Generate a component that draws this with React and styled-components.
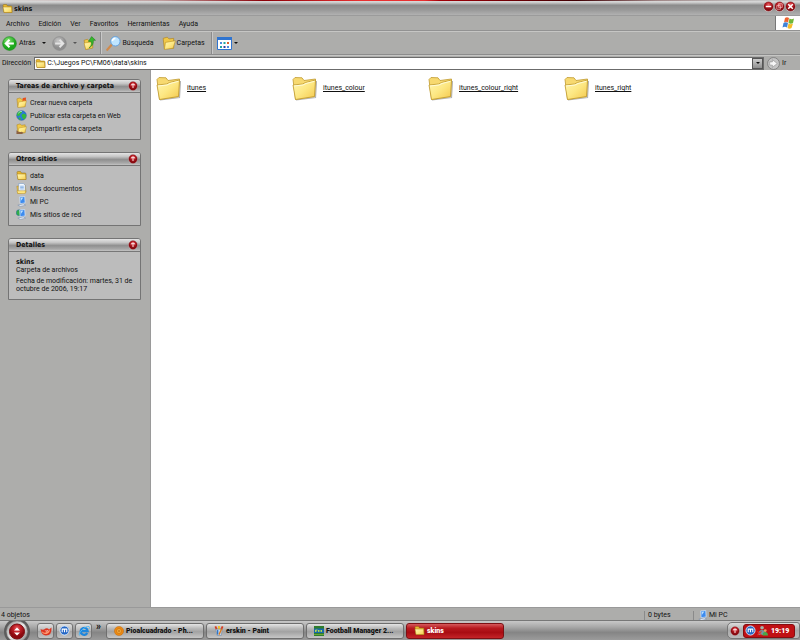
import styled, { createGlobalStyle, css } from 'styled-components';

const GlobalStyle = createGlobalStyle`
  * {
    box-sizing: border-box;
  }
  body {
    margin: 0;
    background: #adadab;
    color: #111;
    font-family: Roboto, sans-serif;
    font-size: 7px;
    line-height: 8px;
  }
  button, input {
    font: inherit;
    color: inherit;
    border: 0;
    padding: 0;
    background: none;
  }
  a {
    color: inherit;
    text-decoration: none;
  }
  svg {
    display: block;
    flex: none;
  }
  ul {
    list-style: none;
    margin: 0;
    padding: 0;
  }
  strong {
    font-family: 'DejaVu Sans Condensed', sans-serif;
  }
`;

const Window = styled.div`
  display: flex;
  flex-direction: column;
  min-height: 100vh;
`;

const TitleBar = styled.header`
  display: flex;
  align-items: center;
  gap: 1px;
  height: 16px;
  padding: 0 4px 0 2px;
  border-top: 1px solid #7a0a10;
  border-image: linear-gradient(90deg, #d8d8d8, #c0a0a0 20%, #8a0008 33%, #e83030 45%, #e83030 53%, #a00008 55%, #400004 72%, #a08888 82%, #c4c4c4 95%) 1;
  background: linear-gradient(#dcdcdc, #c6c6c6 12%, #8b8b8b 28%, #999 60%, #b0b0b0 92%, #8c8c8c);
`;

const WindowTitle = styled.h1`
  flex: 1;
  margin: 0;
  font-family: 'DejaVu Sans Condensed', sans-serif;
  font-size: 7px;
  line-height: 8px;
`;

const WindowButtons = styled.div`
  display: flex;
  align-self: flex-start;
`;

const IconButton = styled.button`
  display: flex;
  align-items: center;
`;

const MenuRow = styled.div`
  display: flex;
  height: 15px;
  border-bottom: 1px solid #929292;
`;

const Menu = styled.nav`
  display: flex;
  flex: 1;
  align-items: center;
  gap: 9px;
  padding: 1px 0 0 6px;
`;

const Flag = styled.div`
  display: flex;
  align-items: center;
  justify-content: center;
  width: 25px;
  border-left: 1px solid #777;
  background: #fff;
`;

const ToolBar = styled.div`
  display: flex;
  align-items: center;
  height: 24px;
  padding-left: 2px;
  border-top: 1px solid #c6c6c4;
  border-bottom: 1px solid #8c8c8c;
`;

const ToolButton = styled.button`
  display: flex;
  align-items: center;
  gap: ${({ $tight }) => ($tight ? 1 : 2)}px;
  margin-right: ${({ $after = 0 }) => $after}px;
`;

const Arrow = styled.span`
  border: 2px solid transparent;
  border-top-color: ${({ $dim }) => ($dim ? '#555' : '#111')};
  border-bottom: 0;
  margin-left: ${({ $before = 0 }) => $before}px;
`;

const Divider = styled.span`
  width: 2px;
  height: 22px;
  margin-right: 4px;
  border-left: 1px solid #8b8b8b;
  border-right: 1px solid #c8c8c8;
`;

const AddressBar = styled.form`
  display: flex;
  align-items: center;
  height: 15px;
  padding: 1px 0 1px 2px;
  gap: 3px;
  border-top: 1px solid #c6c6c4;
`;

const AddressField = styled.div`
  display: flex;
  flex: 1;
  align-items: center;
  height: 13px;
  gap: 1px;
  padding-left: 0;
  border: 1px solid #6b6b6b;
  background: #fff;
`;

const AddressInput = styled.input`
  flex: 1;
  height: 10px;
  outline: 0;
`;

const DropButton = styled.button`
  display: flex;
  align-items: center;
  justify-content: center;
  width: 11px;
  height: 11px;
  border: 1px solid #555;
  background: linear-gradient(#ccc, #8e8e8e);
`;

const GoButton = styled.button`
  display: flex;
  align-items: center;
  gap: 2px;
  width: 33px;
`;

const Content = styled.div`
  display: flex;
  flex: 1;
`;

const Sidebar = styled.aside`
  display: flex;
  flex-direction: column;
  flex: none;
  gap: 12px;
  width: 151px;
  padding: 9px 9px 9px 8px;
  border-right: 1px solid #9a9a9a;
`;

const PanelBox = styled.section`
  border: 1px solid #747474;
  border-radius: 3px 3px 0 0;
  background: #bcbcbc;
`;

const PanelHead = styled.h2`
  display: flex;
  align-items: center;
  justify-content: space-between;
  height: 13px;
  margin: 0;
  padding: 0 2px 0 7px;
  border-bottom: 1px solid #777;
  border-radius: 2px 2px 0 0;
  background: linear-gradient(#e4e4e4, #c4c4c4 30%, #8f8f8f 55%, #a9a9a9 85%, #c4c4c4);
  font-family: 'DejaVu Sans Condensed', sans-serif;
  font-size: 7px;
  line-height: 8px;
`;

const TaskList = styled.ul`
  padding: 3px 7px 4px;
`;

const TaskLink = styled.a`
  display: flex;
  align-items: center;
  gap: 3px;
  height: 13px;
`;

const Details = styled.div`
  padding: 6px 7px;
  p {
    margin: 0 0 3px;
  }
  p:last-child {
    margin: 0;
  }
`;

const Files = styled.main`
  display: grid;
  flex: 1;
  grid-template-columns: repeat(auto-fill, 136px);
  align-content: start;
  padding: 4px 5px;
  background: #fff;
`;

const FileLink = styled.a`
  display: flex;
  align-items: center;
  gap: 6px;
  height: 28px;
  text-decoration: underline;
`;

const StatusBar = styled.footer`
  display: flex;
  align-items: center;
  height: 13px;
  padding-top: 2px;
  border-top: 1px solid #999;
`;

const StatusCell = styled.div`
  display: flex;
  align-items: center;
  gap: 1px;
  height: 9px;
  padding-left: ${({ $lead }) => ($lead ? 1 : 3)}px;
  ${({ $width }) =>
    $width
      ? css`
          width: ${$width}px;
          border-left: 1px solid #8a8a8a;
        `
      : css`
          flex: 1;
        `}
`;

const TaskBar = styled.footer`
  display: flex;
  align-items: center;
  height: 20px;
  border-top: 1px solid #777;
  background: linear-gradient(#c8c8c8, #aaa 30%, #858585 60%, #9b9b9b);
`;

const StartButton = styled.button`
  display: flex;
  justify-content: center;
  width: 33px;
  margin-right: 4px;
`;

const QuickButton = styled.button`
  display: flex;
  align-items: center;
  justify-content: center;
  width: 17px;
  height: 16px;
  margin-right: 2px;
  border: 1px solid #747474;
  border-radius: 3px;
  background: linear-gradient(#e0e0e0, #b5b5b5 50%, #a4a4a4 52%, #c4c4c4);
`;

const More = styled.span`
  width: 12px;
  height: 16px;
  padding-left: 2px;
  font-size: 10px;
  font-weight: bold;
`;

const TaskButton = styled.button`
  display: flex;
  align-items: center;
  gap: 2px;
  flex: 0 1 98px;
  height: 16px;
  margin-right: 2px;
  padding-left: 7px;
  border: 1px solid ${({ $active }) => ($active ? '#7c1014' : '#6e6e6e')};
  border-radius: 3px;
  background: ${({ $active }) =>
    $active
      ? 'linear-gradient(#d65a5c, #b81a20 30%, #a80c12 60%, #c42428)'
      : 'linear-gradient(#e4e4e4, #bbb 30%, #a2a2a2 55%, #c6c6c6)'};
  color: ${({ $active }) => ($active ? '#fff' : '#111')};
  font-weight: 900;
  white-space: nowrap;
`;

const Tray = styled.div`
  display: flex;
  align-items: center;
  gap: 3px;
  height: 17px;
  margin-left: auto;
  padding: 0 4px 0 2px;
  border: 1px solid #777;
  border-radius: 5px 3px 3px 5px;
  background: linear-gradient(#ddd, #aaa 50%, #bbb);
`;

const Clock = styled.div`
  display: flex;
  align-items: center;
  gap: 1px;
  width: 52px;
  height: 14px;
  padding-left: 1px;
  border: 1px solid #860c10;
  border-radius: 3px;
  background: #c01014;
  color: #fff;
  font-weight: 900;
  time {
    margin-left: 2px;
  }
`;

const Folder = () => (
  <svg width="25" height="25" viewBox="0 0 25 25">
    <path d="M4 24 23.500 21.500 24.500 5" fill="none" stroke="#777" strokeWidth="1.200" opacity=".55" />
    <path d="M1 3.500 3 1.500 10 1.800 12 4.500 23.500 3 22.500 20.500 3.500 23.500z" fill="#f7d970" stroke="#c09a30" strokeWidth=".8" />
    <path d="M1 9 10.500 8 13.500 6.500 23.500 4 22.500 20.500 3.500 23.500z" fill="url(#folderFace)" stroke="#c09a30" strokeWidth=".8" />
    <path d="M2 10 11 9l3-1.500 8.500-2.200" fill="none" stroke="#fffbd8" />
  </svg>
);

const SmallFolder = () => (
  <svg width="11" height="11" viewBox="0 0 22 22">
    <path d="M2 5q0-2 2-2h5l2 3h7q2 0 2 2v11H4z" fill="#e8b830" stroke="#8f6d14" />
    <path d="M2 8h17l1 11H4z" fill="url(#folderFace)" stroke="#a87c18" />
  </svg>
);

const OpenFolder = ({ size = 11, children }) => (
  <svg width={size} height={size} viewBox="0 0 24 24">
    <path d="M2 4 9 2l3 3 8-1v17L4 22z" fill="#f0c848" stroke="#a87c18" />
    <path d="M6 11 23 8l-4 13-15 2z" fill="url(#folderFace)" stroke="#b98f22" />
    {children}
  </svg>
);

const RedDot = ({ size = 10, children }) => (
  <svg width={size} height={size} viewBox="0 0 12 12">
    <circle cx="6" cy="6" r="5.600" fill="#ddd" />
    <circle cx="6" cy="6" r="5" fill="url(#redBall)" stroke="#780a10" strokeWidth=".6" />
    {children}
  </svg>
);

const Chevrons = () => (
  <RedDot>
    <path d="M3.500 5 6 3.500 8.500 5M6 4v4.500" stroke="#fff" fill="none" strokeWidth="1.100" />
  </RedDot>
);

const Globe = () => (
  <svg width="11" height="11" viewBox="0 0 24 24">
    <circle cx="12" cy="12" r="10.500" fill="#2b7bd8" stroke="#15509a" />
    <path d="M5 4c4-3 8-2 8 1s-4 2-4 5-5 4-7 2c0-3 1-6 3-8zM14 9c4-2 7 0 8 3s-2 8-5 8-2-4-4-6 0-4 1-5zM6 16l5 2-1 4c-3 0-5-3-4-6z" fill="#35b93c" />
    <path d="M5 7q4-5 8-4" stroke="#d6f4ff" fill="none" strokeWidth="1.500" />
  </svg>
);

const Computer = ({ network }) => (
  <svg width="11" height="11" viewBox="0 0 24 24">
    {network && <circle cx="7" cy="8" r="6.500" fill="#31ad49" stroke="#2464b0" />}
    <path d="M8 2 19 1l1 14-11 2z" fill="#3d8bee" stroke="#dbe9fa" strokeWidth="1.500" />
    <path d="M10 4l6-.6L10.500 11z" fill="#b9e0ff" />
    <path d="m4 20 12-3 5 3-11 3z" fill="#dce4f0" stroke="#7085a4" />
  </svg>
);

const Documents = () => (
  <svg width="11" height="11" viewBox="0 0 24 24">
    <path d="M2 7 20 5l2 15-18 3z" fill="#efc54c" stroke="#a87c18" />
    <path d="M6 1h10l4 4v13H6z" fill="#f5faff" stroke="#5b87c0" />
    <path d="M9 7h8M9 10h8M9 13h8" stroke="#5b93d8" strokeWidth="1.500" />
    <path d="M2 17h19l-1 6H4z" fill="#ffe680" stroke="#b98f22" />
  </svg>
);

const RoundArrow = ({ back }) => (
  <svg width="15" height="15" viewBox="0 0 24 24">
    <circle cx="12" cy="12" r="11" fill={back ? 'url(#greenBall)' : 'url(#greyBall)'} stroke={back ? '#178a18' : '#888'} />
    <path
      d={back ? 'M19 12H6m6-6-6 6 6 6' : 'M5 12h13m-6-6 6 6-6 6'}
      fill="none"
      stroke={back ? '#fff' : '#e4e4e4'}
      strokeWidth="3.200"
    />
  </svg>
);

const UpFolder = () => (
  <svg width="13" height="14" viewBox="0 0 24 26">
    <path d="M2 8 8 6l3 3 7-1v14L5 25z" fill="#f0c848" stroke="#a87c18" />
    <path d="M2 13 16 11l2 11-13 3z" fill="url(#folderFace)" stroke="#b98f22" />
    <path d="M11 22q6-4 4-12h-5l6-9 7 7h-4q1 10-8 14z" fill="#36b82c" stroke="#1b7d18" />
  </svg>
);

const Magnifier = () => (
  <svg width="15" height="15" viewBox="0 0 24 24">
    <path d="m9 14-7 8" stroke="#d08a4c" strokeWidth="3.500" strokeLinecap="round" />
    <circle cx="15" cy="8.500" r="7.500" fill="#bfe5ff" stroke="#5f9fe0" strokeWidth="1.500" />
    <path d="M10 8q1-4 5-4.500" stroke="#fff" strokeWidth="2.500" fill="none" />
  </svg>
);

const Views = () => (
  <svg width="15" height="13" viewBox="0 0 15 13">
    <path d="M.5.5h14v12H.5z" fill="#fff" stroke="#2f74d0" />
    <path d="M0 0h15v3H0z" fill="#2f74d0" />
    <path d="M3 5h2v2H3zM10 9h2v2h-2z" fill="#4f8be0" />
    <path d="M6.500 5h2v2h-2zM3 9h2v2H3z" fill="#22a6a0" />
    <path d="M10 5h2v2h-2z" fill="#e06030" />
    <path d="M6.500 9h2v2h-2z" fill="#383fa0" />
  </svg>
);

const WindowsFlag = () => (
  <svg width="13" height="12" viewBox="0 0 26 24">
    <path d="M6 2q4-3 8 0l-2 9q-4-3-8 0z" fill="#ef6230" />
    <path d="M15 3q4 3 9 0l-2 9q-4 3-9 0z" fill="#70b838" />
    <path d="M3 12q4-3 9 0l-2 9q-4-3-9 0z" fill="#3f83d8" />
    <path d="M13 13q4 3 9 0l-3 9q-4 3-8 0z" fill="#f6bc28" />
  </svg>
);

const BlueM = () => (
  <svg width="11" height="11" viewBox="0 0 24 24">
    <circle cx="12" cy="12" r="10" fill="#2466c4" stroke="#dcecff" strokeWidth="2" />
    <path d="M7 16V9h10v7M12 9v7" stroke="#fff" strokeWidth="2.400" fill="none" />
  </svg>
);

const Firebird = () => (
  <svg width="12" height="12" viewBox="0 0 24 24">
    <path d="M1 8q3 2 7 1 6-5 10 0l5-4q1 16-11 16Q3 21 1 8z" fill="#dc3420" />
    <path d="M3 12q6 6 12 1 4-2 5-5 0 8-7 10-8 1-10-6z" fill="#ff9a70" />
    <path d="M9 11q5 1 8-1-2 5-8 1z" fill="#fff" />
  </svg>
);

const Explorer = () => (
  <svg width="12" height="12" viewBox="0 0 24 24">
    <path d="M18.500 16a7 7 0 1 1 .8-4H6" fill="none" stroke="#1e86dc" strokeWidth="4.500" />
    <path d="M3 21C-1 16 15 1 22 3q2 1 0 5" fill="none" stroke="#52b8f4" strokeWidth="2" />
  </svg>
);

const Orange = () => (
  <svg width="10" height="10" viewBox="0 0 24 24">
    <circle cx="12" cy="12" r="11" fill="#ee8a12" stroke="#b4600a" />
    <circle cx="12" cy="12" r="6" fill="#f8b040" stroke="#c46a08" strokeWidth="1.500" />
    <path d="M9 12h6M12 9v6" stroke="#b4600a" strokeWidth="1.500" />
  </svg>
);

const PaintCup = () => (
  <svg width="10" height="11" viewBox="0 0 22 24">
    <path d="m7 12-4-9M15 12l4-9" stroke="#d83a20" strokeWidth="4" />
    <path d="M11 12V2" stroke="#f5c020" strokeWidth="4" />
    <path d="M4 9h14l-2 14H7z" fill="#c4d8ec" stroke="#5e7798" />
    <path d="M8 11v10" stroke="#2e75c8" strokeWidth="3" />
    <path d="m11 21 6-13" stroke="#e07818" strokeWidth="3" />
  </svg>
);

const Football = () => (
  <svg width="10" height="10" viewBox="0 0 20 20">
    <path d="M0 0h20v20H0z" fill="#2f7d2c" />
    <path d="M0 5h20v9H0z" fill="#1769a8" />
    <path d="M3 12V8h4m-4 2h3m3 2V8l3 3 3-3v4" fill="none" stroke="#d8f040" strokeWidth="1.500" />
    <path d="M0 16h20v1H0z" fill="#a8d040" />
  </svg>
);

const Buddies = () => (
  <svg width="11" height="11" viewBox="0 0 24 24">
    <circle cx="11" cy="6" r="4" fill="#9fb4a8" />
    <path d="M3 22q0-11 8-11t7 11z" fill="#6f98a0" />
    <circle cx="18" cy="12" r="3" fill="#e8a060" />
    <path d="M12 23q0-8 6-8t6 8z" fill="#4aa848" />
    <path d="m1 14 9 8M10 14l-9 8" stroke="#e83028" strokeWidth="2.500" />
  </svg>
);

const GradientDefs = styled.svg`
  position: absolute;
`;

const Defs = () => (
  <GradientDefs width="0" height="0" aria-hidden="true">
    <defs>
      <linearGradient id="folderFace" x1="0" y1="0" x2="1" y2="1">
        <stop offset="0" stopColor="#fff6b4" />
        <stop offset=".5" stopColor="#fde884" />
        <stop offset="1" stopColor="#f4c84c" />
      </linearGradient>
      <radialGradient id="redBall" cx=".5" cy=".3">
        <stop offset="0" stopColor="#e86468" />
        <stop offset=".5" stopColor="#c02028" />
        <stop offset="1" stopColor="#8c0a10" />
      </radialGradient>
      <radialGradient id="greenBall" cx=".4" cy=".3">
        <stop offset="0" stopColor="#8be878" />
        <stop offset="1" stopColor="#1ca81c" />
      </radialGradient>
      <radialGradient id="greyBall" cx=".4" cy=".3">
        <stop offset="0" stopColor="#c8c8c8" />
        <stop offset="1" stopColor="#8e8e8e" />
      </radialGradient>
      <linearGradient id="steel" x1="0" y1="0" x2="1" y2="1">
        <stop offset="0" stopColor="#909090" />
        <stop offset=".5" stopColor="#e8e8e8" />
        <stop offset="1" stopColor="#808080" />
      </linearGradient>
    </defs>
  </GradientDefs>
);

const menus = ['Archivo', 'Edición', 'Ver', 'Favoritos', 'Herramientas', 'Ayuda'];

const tasks = [
  {
    label: 'Crear nueva carpeta',
    icon: (
      <OpenFolder>
        <path d="m15 2 7-1-1 8-3-2-4 3z" fill="#e8501c" />
      </OpenFolder>
    ),
  },
  { label: 'Publicar esta carpeta en Web', icon: <Globe /> },
  {
    label: 'Compartir esta carpeta',
    icon: (
      <OpenFolder>
        <path d="M1 16q5 5 11 3l5 2-4 3H1z" fill="#8c6242" />
      </OpenFolder>
    ),
  },
];

const places = [
  { label: 'data', icon: <SmallFolder /> },
  { label: 'Mis documentos', icon: <Documents /> },
  { label: 'Mi PC', icon: <Computer /> },
  { label: 'Mis sitios de red', icon: <Computer network /> },
];

const files = ['itunes', 'itunes_colour', 'itunes_colour_right', 'itunes_right'];

const openWindows = [
  { title: 'Pioalcuadrado - Ph...', icon: <Orange /> },
  { title: 'erskin - Paint', icon: <PaintCup /> },
  { title: 'Football Manager 2...', icon: <Football /> },
  { title: 'skins', icon: <SmallFolder />, active: true },
];

const Panel = ({ title, children }) => (
  <PanelBox>
    <PanelHead>
      {title}
      <IconButton type="button" aria-label={`Contraer ${title}`}>
        <Chevrons />
      </IconButton>
    </PanelHead>
    {children}
  </PanelBox>
);

const Links = ({ items }) => (
  <TaskList>
    {items.map(({ label, icon }) => (
      <li key={label}>
        <TaskLink href="#">
          {icon}
          {label}
        </TaskLink>
      </li>
    ))}
  </TaskList>
);

const App = () => (
  <>
    <GlobalStyle />
    <Defs />
    <Window>
      <TitleBar>
        <SmallFolder />
        <WindowTitle>skins</WindowTitle>
        <WindowButtons>
          <IconButton type="button" aria-label="Minimizar">
            <RedDot size={11}>
              <path d="M3 6h6" stroke="#fff" strokeWidth="1.600" />
            </RedDot>
          </IconButton>
          <IconButton type="button" aria-label="Restaurar">
            <RedDot size={11}>
              <path d="M5 3h4v4H5zM3 5h4v4H3z" stroke="#f4caca" fill="none" strokeWidth=".7" />
            </RedDot>
          </IconButton>
          <IconButton type="button" aria-label="Cerrar">
            <RedDot size={11}>
              <path d="m3.500 3.500 5 5m0-5-5 5" stroke="#fff" strokeWidth="1.600" />
            </RedDot>
          </IconButton>
        </WindowButtons>
      </TitleBar>

      <MenuRow>
        <Menu>
          {menus.map(name => (
            <button key={name} type="button">
              {name}
            </button>
          ))}
        </Menu>
        <Flag>
          <WindowsFlag />
        </Flag>
      </MenuRow>

      <ToolBar>
        <ToolButton type="button" $after={6}>
          <RoundArrow back />
          Atrás
          <Arrow $before={5} />
        </ToolButton>
        <ToolButton type="button" aria-label="Adelante" $after={6}>
          <RoundArrow />
          <Arrow $dim $before={4} />
        </ToolButton>
        <ToolButton type="button" aria-label="Arriba" $after={4}>
          <UpFolder />
        </ToolButton>
        <Divider />
        <ToolButton type="button" $after={8} $tight>
          <Magnifier />
          Búsqueda
        </ToolButton>
        <ToolButton type="button" $after={6} $tight>
          <OpenFolder size={14} />
          Carpetas
        </ToolButton>
        <Divider />
        <ToolButton type="button" aria-label="Vistas">
          <Views />
          <Arrow />
        </ToolButton>
      </ToolBar>

      <AddressBar>
        <label htmlFor="address">Dirección</label>
        <AddressField>
          <SmallFolder />
          <AddressInput id="address" defaultValue="C:\Juegos PC\FM06\data\skins" />
          <DropButton type="button" aria-label="Mostrar direcciones">
            <Arrow />
          </DropButton>
        </AddressField>
        <GoButton type="button">
          <svg width="13" height="13" viewBox="0 0 24 24">
            <circle cx="12" cy="12" r="11" fill="#c4c4c4" stroke="#777" strokeWidth="1.500" />
            <path d="M5 9h5V5l9 7-9 7v-4H5z" fill="#f6f6f6" stroke="#888" />
          </svg>
          Ir
        </GoButton>
      </AddressBar>

      <Content>
        <Sidebar>
          <Panel title="Tareas de archivo y carpeta">
            <Links items={tasks} />
          </Panel>
          <Panel title="Otros sitios">
            <Links items={places} />
          </Panel>
          <Panel title="Detalles">
            <Details>
              <strong>skins</strong>
              <p>Carpeta de archivos</p>
              <p>Fecha de modificación: martes, 31 de octubre de 2006, 19:17</p>
            </Details>
          </Panel>
        </Sidebar>
        <Files>
          {files.map(name => (
            <FileLink key={name} href="#">
              <Folder />
              {name}
            </FileLink>
          ))}
        </Files>
      </Content>

      <StatusBar>
        <StatusCell $lead>4 objetos</StatusCell>
        <StatusCell $width={49}>0 bytes</StatusCell>
        <StatusCell $width={107}>
          <Computer />
          Mi PC
        </StatusCell>
      </StatusBar>

      <TaskBar>
        <StartButton type="button" aria-label="Inicio">
          <svg width="28" height="20" viewBox="0 0 28 20">
            <circle cx="14" cy="10.500" r="13" fill="#5c5c5c" />
            <circle cx="14" cy="10.500" r="10.500" fill="url(#steel)" stroke="#888" strokeWidth=".5" />
            <circle cx="14" cy="10.500" r="7.500" fill="url(#redBall)" stroke="#7c0c10" />
            <path d="m11 9.500 3-3 3 3zM11 11.500l3 3 3-3z" fill="#fff" />
          </svg>
        </StartButton>
        <QuickButton type="button" aria-label="Navegador">
          <Firebird />
        </QuickButton>
        <QuickButton type="button" aria-label="Maxthon">
          <BlueM />
        </QuickButton>
        <QuickButton type="button" aria-label="Internet Explorer">
          <Explorer />
        </QuickButton>
        <More>»</More>
        {openWindows.map(({ title, icon, active }) => (
          <TaskButton key={title} type="button" $active={active}>
            {icon}
            {title}
          </TaskButton>
        ))}
        <Tray>
          <Chevrons />
          <Clock>
            <BlueM />
            <Buddies />
            <time>19:19</time>
          </Clock>
        </Tray>
      </TaskBar>
    </Window>
  </>
);

export default App;
